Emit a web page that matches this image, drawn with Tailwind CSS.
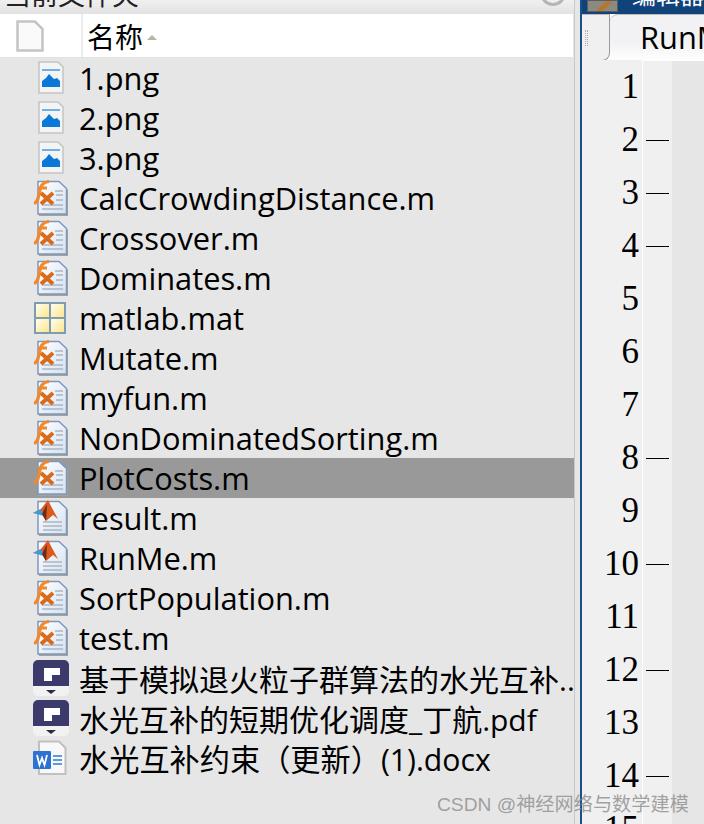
<!DOCTYPE html>
<html lang="en">
<head>
    <meta charset="UTF-8">
    <title>当前文件夹</title>
    <script src="https://cdn.jsdelivr.net/npm/@tailwindcss/browser@4"></script>
</head>
<body class="w-[704px] h-[824px] overflow-hidden bg-[#e6e6e6] relative font-['Open_Sans','Noto_Sans_CJK_SC',sans-serif] text-black">
    <!-- icon defs -->
    <svg width="0" height="0" class="absolute">
        <defs>
            <linearGradient id="sheet" x1="0" y1="0" x2="1" y2="1"><stop offset="0" stop-color="#ffffff"/><stop offset="1" stop-color="#d5e2f2"/></linearGradient>
            <linearGradient id="cell" x1="0" y1="0" x2="1" y2="1"><stop offset="0" stop-color="#fffdf0"/><stop offset="1" stop-color="#fbe68a"/></linearGradient>
            <symbol id="png" viewBox="0 0 36 36">
                <path d="M6 2H25L30 7V33H6Z" fill="#f4f4f4" stroke="#c4c4c4" stroke-width="1.500"/>
                <path d="M9 10H27" stroke="#6db0ea" stroke-width="2"/>
                <path d="M9 27V21L13 18L16 14L19 17L21 19L24 18L27 21V27Z" fill="#0a78d7"/>
            </symbol>
            <symbol id="fx" viewBox="0 0 36 36">
                <path d="M6 3H27L35 10V36H6Z" fill="#a3a39a"/>
                <path d="M5 1.500H26L33.500 8.500V34H5Z" fill="url(#sheet)" stroke="#7f97bd" stroke-width="1.500"/>
                <path d="M22 11H30M23 15H30M23 20H30M9 25H30M9 29H30" stroke="#aab5c4" stroke-width="1.500"/>
                <path d="M1 23C4 23 5 20 6.500 12C7.500 5 10 2 16 1.500M5 8H14" fill="none" stroke="#ee8a2e" stroke-width="3.200"/>
                <path d="M8 13L20 24M20 13L8 24" stroke="#d96a17" stroke-width="3.800"/>
            </symbol>
            <symbol id="ml" viewBox="0 0 36 36">
                <path d="M6 3H27L35 10V36H6Z" fill="#a3a39a"/>
                <path d="M5 1.500H26L33.500 8.500V34H5Z" fill="url(#sheet)" stroke="#7f97bd" stroke-width="1.500"/>
                <path d="M10 22H29M10 26H29M10 30H29" stroke="#aab5c4" stroke-width="1.500"/>
                <path d="M0 13L8 9L15 0L19 8L25 19L20 15L13 21L9 14Z" fill="#dc5a1e"/>
                <path d="M0 13L8 9L11 16Z" fill="#3f9bd8"/>
                <path d="M9 14L14 4L13 21Z" fill="#6b2a1b"/>
            </symbol>
            <symbol id="mat" viewBox="0 0 34 34">
                <rect x="1" y="1" width="32" height="32" fill="#7f9cb3"/>
                <rect x="3" y="3" width="13" height="13" fill="url(#cell)"/>
                <rect x="18" y="3" width="13" height="13" fill="url(#cell)"/>
                <rect x="3" y="18" width="13" height="13" fill="url(#cell)"/>
                <rect x="18" y="18" width="13" height="13" fill="url(#cell)"/>
            </symbol>
            <symbol id="pdf" viewBox="0 0 36 36">
                <rect x="0" y="0" width="36" height="36" rx="5" fill="#f2f2f2"/>
                <path d="M0 26V5A5 5 0 0 1 5 0H31A5 5 0 0 1 36 5V26Z" fill="#3b3a6b"/>
                <path d="M11 8H27V15H19V21H11Z" fill="#ffffff"/>
                <path d="M13 30H23L18 34Z" fill="#2b2b3f"/>
            </symbol>
            <symbol id="word" viewBox="0 0 36 36">
                <path d="M6 1.500H26L32.500 8V34H6Z" fill="#f8f8f8" stroke="#c0c0c0" stroke-width="2"/>
                <rect x="0" y="11" width="18" height="18" rx="1" fill="#2b73cf"/>
                <path d="M4 15L6.500 25L9 18L11.500 25L14 15" fill="none" stroke="#ffffff" stroke-width="1.800"/>
                <path d="M20 16H29M20 20H29M20 24H29" stroke="#5d9be0" stroke-width="2"/>
            </symbol>
        </defs>
    </svg>

    <div class="flex h-full">
        <!-- current folder panel -->
        <div class="w-[575px] shrink-0 flex flex-col border-r border-[#c8c8c8]">
            <div class="h-[14px] shrink-0 overflow-hidden bg-gradient-to-b from-[#f0f0f0] to-[#e2e2e2] flex justify-between">
                <span class="block ml-[4px] -mt-[21px] text-[27px] leading-[32px] text-[#222]">当前文件夹</span>
                <span class="block w-[26px] h-[26px] -mt-[20px] mr-[8px] rounded-full border-[3px] border-[#b5b5b5]"></span>
            </div>
            <div class="h-[44px] shrink-0 mr-[1px] bg-white flex border-b border-[#e2e2e2]">
                <div class="w-[83px] border-r-2 border-[#ececec] flex items-center pl-[16px]">
                    <svg width="28" height="32" viewBox="0 0 28 32"><path d="M1.500 1.500H19L26.500 9V30.500H1.500Z" fill="#fafafa" stroke="#c4c4c4" stroke-width="2.500"/></svg>
                </div>
                <div class="flex items-center pl-[4px] pt-[2px] text-[28px] leading-none">名称<span class="ml-[4px] mt-[2px] border-x-[5px] border-b-[5px] border-x-transparent border-b-[#b5b5a5]"></span></div>
            </div>
            <div id="list" class="flex flex-col text-[30.8px]">
                <div class="flex items-center h-[40px]"><svg class="ml-[33px] w-[36px] h-[36px] shrink-0"><use href="#png"/></svg><span class="ml-[10px]">1.png</span></div>
                <div class="flex items-center h-[40px]"><svg class="ml-[33px] w-[36px] h-[36px] shrink-0"><use href="#png"/></svg><span class="ml-[10px]">2.png</span></div>
                <div class="flex items-center h-[40px]"><svg class="ml-[33px] w-[36px] h-[36px] shrink-0"><use href="#png"/></svg><span class="ml-[10px]">3.png</span></div>
                <div class="flex items-center h-[40px]"><svg class="ml-[33px] w-[36px] h-[36px] shrink-0"><use href="#fx"/></svg><span class="ml-[10px]">CalcCrowdingDistance.m</span></div>
                <div class="flex items-center h-[40px]"><svg class="ml-[33px] w-[36px] h-[36px] shrink-0"><use href="#fx"/></svg><span class="ml-[10px]">Crossover.m</span></div>
                <div class="flex items-center h-[40px]"><svg class="ml-[33px] w-[36px] h-[36px] shrink-0"><use href="#fx"/></svg><span class="ml-[10px]">Dominates.m</span></div>
                <div class="flex items-center h-[40px]"><svg class="ml-[33px] w-[34px] h-[34px] mr-[2px] shrink-0"><use href="#mat"/></svg><span class="ml-[10px]">matlab.mat</span></div>
                <div class="flex items-center h-[40px]"><svg class="ml-[33px] w-[36px] h-[36px] shrink-0"><use href="#fx"/></svg><span class="ml-[10px]">Mutate.m</span></div>
                <div class="flex items-center h-[40px]"><svg class="ml-[33px] w-[36px] h-[36px] shrink-0"><use href="#fx"/></svg><span class="ml-[10px]">myfun.m</span></div>
                <div class="flex items-center h-[40px]"><svg class="ml-[33px] w-[36px] h-[36px] shrink-0"><use href="#fx"/></svg><span class="ml-[10px]">NonDominatedSorting.m</span></div>
                <div class="flex items-center h-[40px] bg-[#999999]"><svg class="ml-[33px] w-[36px] h-[36px] shrink-0"><use href="#fx"/></svg><span class="ml-[10px]">PlotCosts.m</span></div>
                <div class="flex items-center h-[40px]"><svg class="ml-[33px] w-[36px] h-[36px] shrink-0"><use href="#ml"/></svg><span class="ml-[10px]">result.m</span></div>
                <div class="flex items-center h-[40px]"><svg class="ml-[33px] w-[36px] h-[36px] shrink-0"><use href="#ml"/></svg><span class="ml-[10px]">RunMe.m</span></div>
                <div class="flex items-center h-[40px]"><svg class="ml-[33px] w-[36px] h-[36px] shrink-0"><use href="#fx"/></svg><span class="ml-[10px]">SortPopulation.m</span></div>
                <div class="flex items-center h-[40px]"><svg class="ml-[33px] w-[36px] h-[36px] shrink-0"><use href="#fx"/></svg><span class="ml-[10px]">test.m</span></div>
                <div class="flex items-center h-[40px] text-[30px]"><svg class="ml-[33px] w-[36px] h-[36px] shrink-0"><use href="#pdf"/></svg><span class="ml-[10px] mt-[3px] whitespace-nowrap">基于模拟退火粒子群算法的水光互补..</span></div>
                <div class="flex items-center h-[40px] text-[30px]"><svg class="ml-[33px] w-[36px] h-[36px] shrink-0"><use href="#pdf"/></svg><span class="ml-[10px] mt-[3px] whitespace-nowrap">水光互补的短期优化调度_丁航.pdf</span></div>
                <div class="flex items-center h-[40px] text-[30.200px]"><svg class="ml-[33px] w-[36px] h-[36px] shrink-0"><use href="#word"/></svg><span class="ml-[10px] mt-[3px] whitespace-nowrap">水光互补约束（更新）(1).docx</span></div>
            </div>
        </div>

        <!-- editor panel -->
        <div class="ml-[5px] flex-1 min-w-0 border-l-2 border-[#1a4f8b] flex flex-col overflow-hidden">
            <div class="h-[14px] shrink-0 bg-[#0f4379] flex overflow-hidden">
                <div class="w-[31px] h-[12px] ml-[5px] shrink-0 bg-[#8a8a80] border border-[#5c5c5c] overflow-hidden"><svg width="29" height="12"><path d="M9 12L22 0" stroke="#b5772e" stroke-width="5"/></svg></div>
                <span class="ml-[14px] -mt-[21px] text-[24px] leading-[32px] text-white whitespace-nowrap">编辑器</span>
            </div>
            <div class="h-[47px] shrink-0 bg-white flex">
                <div class="w-[28px] shrink-0 bg-[#f0f0f0] border-t border-[#bbb] border-b border-r border-b-[#999] border-r-[#999] rounded-br-[8px] flex items-center pl-[3px]"><span class="w-[3px] h-[16px] border-x border-dotted border-[#aaa]"></span></div>
                <div class="flex-1 bg-gradient-to-b from-[#f2f2f4] from-60% to-white border-t border-[#bbb] rounded-tl-[8px] pl-[30px] text-[30.8px] leading-[44px] whitespace-nowrap">RunMe.m</div>
            </div>
            <div class="flex flex-1">
                <div class="w-[61px] bg-[#f0f0f0] border-r border-white font-['Liberation_Serif',serif] text-[35px] leading-[53px] text-right pr-[3px] shrink-0 -mt-[1px]">
                    <div>1</div><div>2</div><div>3</div><div>4</div><div>5</div><div>6</div><div>7</div><div>8</div><div>9</div><div>10</div><div>11</div><div>12</div><div>13</div><div>14</div><div>15</div>
                </div>
                <div class="w-[29px] bg-[#f0f0f0] shrink-0">
                    <div class="h-[53px]"></div>
                    <div class="h-[53px] flex items-center px-[3px]"><span class="h-[1px] w-full bg-black"></span></div>
                    <div class="h-[53px] flex items-center px-[3px]"><span class="h-[1px] w-full bg-black"></span></div>
                    <div class="h-[53px] flex items-center px-[3px]"><span class="h-[1px] w-full bg-black"></span></div>
                    <div class="h-[53px]"></div><div class="h-[53px]"></div><div class="h-[53px]"></div>
                    <div class="h-[53px] flex items-center px-[3px]"><span class="h-[1px] w-full bg-black"></span></div>
                    <div class="h-[53px]"></div>
                    <div class="h-[53px] flex items-center px-[3px]"><span class="h-[1px] w-full bg-black"></span></div>
                    <div class="h-[53px]"></div>
                    <div class="h-[53px] flex items-center px-[3px]"><span class="h-[1px] w-full bg-black"></span></div>
                    <div class="h-[53px]"></div>
                    <div class="h-[53px] flex items-center px-[3px]"><span class="h-[1px] w-full bg-black"></span></div>
                </div>
            </div>
        </div>
    </div>

    <!-- watermark -->
    <div class="absolute left-[437px] top-[792px] text-[19.200px] leading-[26px] text-[#8c8c8c]/80 whitespace-nowrap font-['Liberation_Sans','Noto_Sans_CJK_SC',sans-serif]">CSDN @神经网络与数学建模</div>
</body>
</html>
